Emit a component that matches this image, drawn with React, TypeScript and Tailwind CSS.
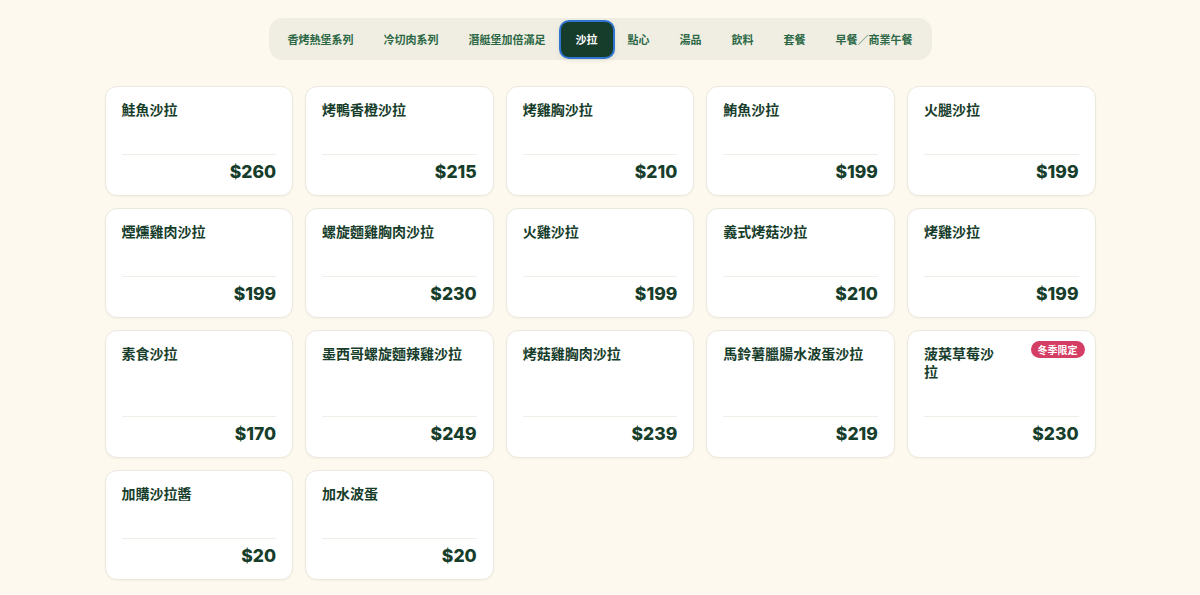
import { useState } from "react";

const tabs = ["香烤熱堡系列", "冷切肉系列", "潛艇堡加倍滿足", "沙拉", "點心", "湯品", "飲料", "套餐", "早餐／商業午餐"];

type Item = { name: string; price: number; badge?: string };

const items: Item[] = [
  { name: "鮭魚沙拉", price: 260 },
  { name: "烤鴨香橙沙拉", price: 215 },
  { name: "烤雞胸沙拉", price: 210 },
  { name: "鮪魚沙拉", price: 199 },
  { name: "火腿沙拉", price: 199 },
  { name: "煙燻雞肉沙拉", price: 199 },
  { name: "螺旋麵雞胸肉沙拉", price: 230 },
  { name: "火雞沙拉", price: 199 },
  { name: "義式烤菇沙拉", price: 210 },
  { name: "烤雞沙拉", price: 199 },
  { name: "素食沙拉", price: 170 },
  { name: "墨西哥螺旋麵辣雞沙拉", price: 249 },
  { name: "烤菇雞胸肉沙拉", price: 239 },
  { name: "馬鈴薯臘腸水波蛋沙拉", price: 219 },
  { name: "菠菜草莓沙拉", price: 230, badge: "冬季限定" },
  { name: "加購沙拉醬", price: 20 },
  { name: "加水波蛋", price: 20 },
];

const cjk = "font-['Noto_Sans_CJK_TC','Noto_Sans',sans-serif]";

function MenuCard({ item }: { item: Item }) {
  return (
    <div className="relative flex flex-col rounded-xl border border-[#ebe8de] bg-white px-4 pt-[13px] pb-[11px] shadow-[0_1px_2px_rgba(60,50,20,0.04)]">
      {item.badge ? (
        <span className={`absolute right-[10px] top-[10px] rounded-full bg-[#d43d64] px-[7px] py-[1px] text-[10px] font-bold leading-[15px] text-white ${cjk}`}>
          {item.badge}
        </span>
      ) : null}
      <p className={`flex-1 pb-[36px] text-[14px] font-bold leading-[18px] text-[#173d2b] ${item.badge ? "pr-[76px]" : ""} ${cjk}`}>{item.name}</p>
      <div className="border-t border-[#f0eee7] pt-[5px] text-right font-['Inter',sans-serif] text-[17.5px] font-extrabold leading-6 text-[#173d2b]">
        ${item.price}
      </div>
    </div>
  );
}

export default function App() {
  const [active, setActive] = useState("沙拉");

  return (
    <div className="min-h-[595px] bg-[#fdf9ee] pt-[18px] pb-4">
      <nav className="mx-auto flex w-fit items-center rounded-[14px] bg-[#f0eee3] p-1 pb-[3px]">
        {tabs.map((tab) => (
          <button
            key={tab}
            onClick={() => setActive(tab)}
            className={`h-[35px] rounded-lg px-[15px] text-[11px] font-bold ${cjk} ${
              tab === active
                ? "bg-[#163d2c] text-white ring-2 ring-[#2f74d0] shadow-[0_2px_6px_rgba(0,0,0,0.15)]"
                : "text-[#2c6845]"
            }`}
          >
            {tab}
          </button>
        ))}
      </nav>
      <div className="mx-auto mt-[26px] grid w-[991px] grid-cols-5 gap-3">
        {items.map((item) => (
          <MenuCard key={item.name} item={item} />
        ))}
      </div>
    </div>
  );
}
